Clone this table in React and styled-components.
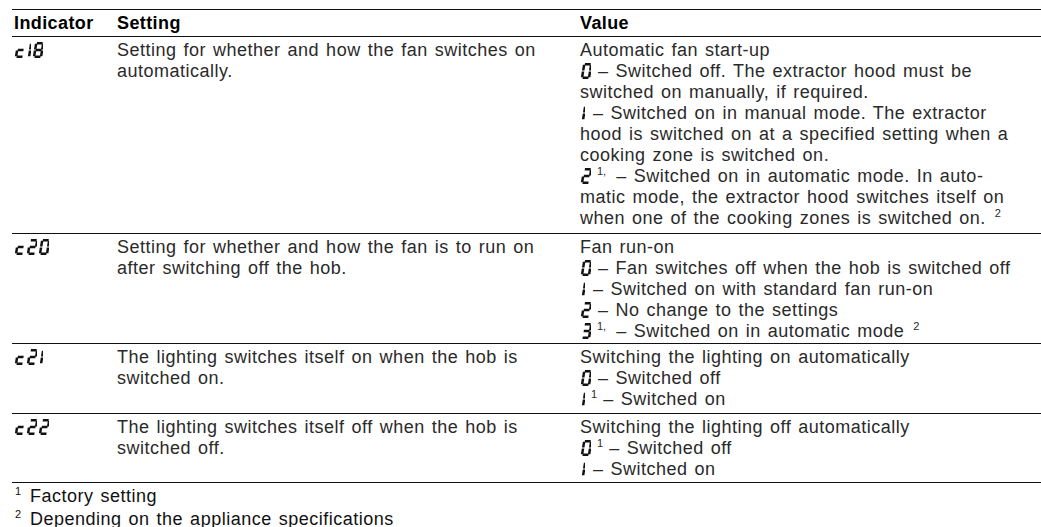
import React from 'react'
import styled, { createGlobalStyle } from 'styled-components'

const GlobalStyle = createGlobalStyle`
  body {
    margin: 0;
    background: #fff;
    font-family: "Liberation Sans", Arial, sans-serif;
  }
`;

const Page = styled.div`
  padding: 9px 0 0 12px;
  width: 1029px;
`;

const Table = styled.table`
  width: 100%;
  border-collapse: collapse;
  border-top: 1px solid #111;
  font-size: 18px;
  line-height: 21px;
  letter-spacing: 0.5px;
  word-spacing: 1.5px;
  color: #2a2a2a;
`;

const HeadCell = styled.th`
  text-align: left;
  font-weight: bold;
  letter-spacing: 0.4px;
  word-spacing: 0;
  color: #000;
  padding: 3px 0 2px ${p => p.$pad || 0}px;
  width: ${p => p.$w ? p.$w + 'px' : 'auto'};
  border-bottom: 1px solid #111;
`;

const Row = styled.tr`
  border-bottom: 1px solid #111;
`;

const Cell = styled.td`
  vertical-align: top;
  padding: 3px 0 ${p => p.$bottom ?? 3}px ${p => p.$pad || 0}px;
`;

const Line = styled.span`
  display: block;
  white-space: nowrap;
`;

const Sup = styled.sup`
  font-size: 11px;
  letter-spacing: 0;
  line-height: 0;
  vertical-align: 7px;
  margin: 0 ${p => p.$after || 0}px 0 ${p => p.$before || 0}px;
`;

const Notes = styled.div`
  padding: 3px 0 0 2px;
  font-size: 18px;
  line-height: 21px;
  letter-spacing: 0.5px;
  word-spacing: 1.5px;
  color: #111;
`;

const Note = styled.div`
  display: flex;
  align-items: baseline;
`;

const NoteMark = styled.span`
  width: 15px;
  font-size: 11px;
  letter-spacing: 0;
  position: relative;
  top: -7px;
  padding-left: 1px;
`;

const SegWrap = styled.span`
  display: inline-flex;
  gap: 1px;
  vertical-align: -2px;
  margin-right: ${p => p.$mr || 0}px;
`;

const SEGS = {
  a: [1.8, 1.2, 7.6, 1.2],
  b: [8.2, 1.8, 8.2, 7.4],
  c: [8.2, 8.6, 8.2, 14.2],
  d: [1.8, 14.8, 7.6, 14.8],
  e: [1.2, 8.6, 1.2, 14.2],
  f: [1.2, 1.8, 1.2, 7.4],
  g: [1.8, 8, 7.6, 8],
}

const MAP = {
  '0': 'abcdef',
  '1': 'bc',
  '2': 'abged',
  '3': 'abgcd',
  '8': 'abcdefg',
  'c': 'ged',
}

const SegChar = ({ ch }) => {
  const narrow = ch === '1'
  const w = narrow ? 5 : 11
  return (
    <svg width={w} height={16} viewBox={`${narrow ? 4.8 : -1.2} 0 ${w} 16`}>
      <g transform="translate(2 0) skewX(-9)" stroke="#111" strokeWidth="2.5" strokeLinecap="butt">
        {MAP[ch].split('').map(s => {
          const [x1, y1, x2, y2] = SEGS[s]
          return <line key={s} x1={x1} y1={y1} x2={x2} y2={y2} />
        })}
      </g>
    </svg>
  )
}

const Seg = ({ text, mr }) => (
  <SegWrap role="img" aria-label={text} $mr={mr}>
    {text.split('').map((ch, i) => <SegChar key={i} ch={ch} />)}
  </SegWrap>
)

const rows = [
  {
    code: 'c18',
    setting: ['Setting for whether and how the fan switches on', 'automatically.'],
    value: [
      'Automatic fan start-up',
      <><Seg text="0" mr={7} />– Switched off. The extractor hood must be</>,
      'switched on manually, if required.',
      <><Seg text="1" mr={8} />– Switched on in manual mode. The extractor</>,
      'hood is switched on at a specified setting when a',
      'cooking zone is switched on.',
      <><Seg text="2" /><Sup $before={6} $after={10}>1,</Sup>– Switched on in automatic mode. In auto-</>,
      'matic mode, the extractor hood switches itself on',
      <>when one of the cooking zones is switched on. <Sup $before={2}>2</Sup></>,
    ],
    bottom: 4,
  },
  {
    code: 'c20',
    setting: ['Setting for whether and how the fan is to run on', 'after switching off the hob.'],
    value: [
      'Fan run-on',
      <><Seg text="0" mr={7} />– Fan switches off when the hob is switched off</>,
      <><Seg text="1" mr={8} />– Switched on with standard fan run-on</>,
      <><Seg text="2" mr={7} />– No change to the settings</>,
      <><Seg text="3" /><Sup $before={6} $after={10}>1,</Sup>– Switched on in automatic mode <Sup $before={2}>2</Sup></>,
    ],
    bottom: 1,
  },
  {
    code: 'c21',
    setting: ['The lighting switches itself on when the hob is', 'switched on.'],
    value: [
      'Switching the lighting on automatically',
      <><Seg text="0" mr={7} />– Switched off</>,
      <><Seg text="1" /><Sup $before={6} $after={6}>1</Sup>– Switched on</>,
    ],
    bottom: 3,
  },
  {
    code: 'c22',
    setting: ['The lighting switches itself off when the hob is', 'switched off.'],
    value: [
      'Switching the lighting off automatically',
      <><Seg text="0" /><Sup $before={6} $after={6}>1</Sup>– Switched off</>,
      <><Seg text="1" mr={8} />– Switched on</>,
    ],
    bottom: 2,
  },
]

const App = () => (
  <Page>
    <GlobalStyle />
    <Table>
      <thead>
        <tr>
          <HeadCell $w={103} $pad={2}>Indicator</HeadCell>
          <HeadCell $w={463}>Setting</HeadCell>
          <HeadCell>Value</HeadCell>
        </tr>
      </thead>
      <tbody>
        {rows.map(r => (
          <Row key={r.code}>
            <Cell $pad={2} $bottom={r.bottom}><Seg text={r.code} /></Cell>
            <Cell $bottom={r.bottom}>
              {r.setting.map((l, i) => <Line key={i}>{l}</Line>)}
            </Cell>
            <Cell $bottom={r.bottom}>
              {r.value.map((l, i) => <Line key={i}>{l}</Line>)}
            </Cell>
          </Row>
        ))}
      </tbody>
    </Table>
    <Notes>
      <Note><NoteMark>1</NoteMark>Factory setting</Note>
      <Note><NoteMark>2</NoteMark>Depending on the appliance specifications</Note>
    </Notes>
  </Page>
)

export default App
